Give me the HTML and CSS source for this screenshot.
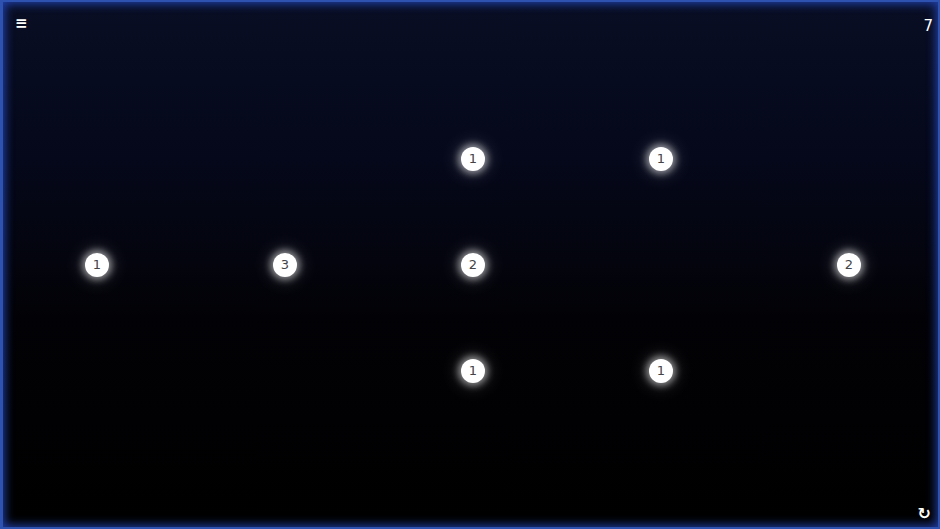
FILE: index.html
```html
<!DOCTYPE html>
<html>
<head>
<meta charset="utf-8">
<link rel="stylesheet" href="styles.css">
</head>
<body>
<div class="frame">
  <div class="topbar">
    <span class="menu">&#8801;</span>
    <span class="level">7</span>
  </div>
  <div class="board">
    <div class="cell"></div><div class="cell"></div><div class="cell"><span class="node">1</span></div><div class="cell"><span class="node">1</span></div><div class="cell"></div>
    <div class="cell"><span class="node">1</span></div><div class="cell"><span class="node">3</span></div><div class="cell"><span class="node">2</span></div><div class="cell"></div><div class="cell"><span class="node">2</span></div>
    <div class="cell"></div><div class="cell"></div><div class="cell"><span class="node">1</span></div><div class="cell"><span class="node">1</span></div><div class="cell"></div>
  </div>
  <div class="bottombar">
    <span class="reset">&#8635;</span>
  </div>
</div>
</body>
</html>
```
FILE: styles.css
```css
html, body {
  margin: 0;
  padding: 0;
  background: #000;
}
.frame {
  box-sizing: border-box;
  width: 940px;
  height: 529px;
  border: 2px solid #2e52b0;
  border-left-width: 3px;
  box-shadow: inset 0 0 10px 2px rgba(40, 80, 210, 0.75);
  background: linear-gradient(to bottom, #090e24 0%, #05081a 30%, #020206 60%, #000 100%);
  display: flex;
  flex-direction: column;
  font-family: "DejaVu Sans", "Liberation Sans", sans-serif;
  color: #fff;
  overflow: hidden;
}
.topbar {
  height: 104px;
  display: flex;
  justify-content: space-between;
  align-items: flex-start;
  padding: 12px 5px 0 12px;
  box-sizing: border-box;
}
.menu {
  font-size: 15px;
  line-height: 18px;
  font-weight: bold;
}
.level {
  font-size: 15px;
  line-height: 20px;
  margin-top: 2px;
}
.board {
  display: grid;
  grid-template-columns: repeat(5, 188px);
  grid-template-rows: repeat(3, 106px);
}
.cell {
  display: flex;
  align-items: center;
  justify-content: center;
}
.node {
  width: 24px;
  height: 24px;
  border-radius: 50%;
  background: #fff;
  color: #444;
  font-size: 13px;
  line-height: 24px;
  text-align: center;
  box-shadow: 0 0 7px 3px rgba(255, 255, 255, 0.5), 0 0 18px 6px rgba(255, 255, 255, 0.12);
}
.bottombar {
  flex: 1;
  display: flex;
  justify-content: flex-end;
  align-items: flex-end;
  padding: 0 7px 3px 0;
}
.reset {
  font-size: 16px;
  line-height: 20px;
  font-weight: bold;
}
```
